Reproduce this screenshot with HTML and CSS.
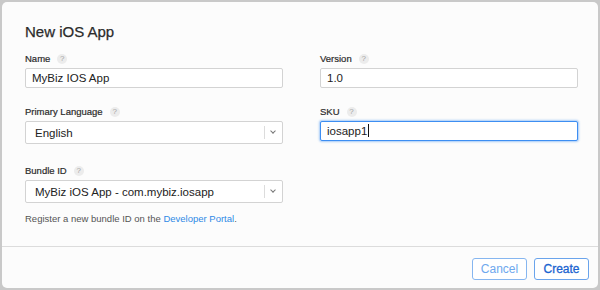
FILE: index.html
```html
<!DOCTYPE html>
<html lang="en">
<head>
    <meta charset="UTF-8">
    <meta name="viewport" content="width=device-width, initial-scale=1.0">
    <title>New iOS App</title>
    <link rel="stylesheet" href="styles.css">
</head>
<body>
    <div class="dialog">
        <div class="dialog-body">
            <h1>New iOS App</h1>
            <div class="fields">
                <div class="field">
                    <label>Name <span class="help">?</span></label>
                    <div class="input">MyBiz IOS App</div>
                </div>
                <div class="field">
                    <label>Version <span class="help">?</span></label>
                    <div class="input">1.0</div>
                </div>
                <div class="field">
                    <label>Primary Language <span class="help">?</span></label>
                    <div class="select">
                        <span class="select-value">English</span>
                        <span class="select-arrow"></span>
                    </div>
                </div>
                <div class="field">
                    <label>SKU <span class="help">?</span></label>
                    <div class="input focused">iosapp1<span class="caret"></span></div>
                </div>
                <div class="field bundle">
                    <label>Bundle ID <span class="help">?</span></label>
                    <div class="select">
                        <span class="select-value">MyBiz iOS App - com.mybiz.iosapp</span>
                        <span class="select-arrow"></span>
                    </div>
                    <p class="hint">Register a new bundle ID on the <a href="#">Developer Portal</a>.</p>
                </div>
            </div>
        </div>
        <div class="dialog-footer">
            <button class="btn cancel">Cancel</button>
            <button class="btn create">Create</button>
        </div>
    </div>
</body>
</html>
```

FILE: styles.css
```css
body {
    margin: 0;
    padding: 2px 2px 0 2px;
    background-color: #c9c9c9;
    font-family: "Liberation Sans", Arial, sans-serif;
    color: #333;
    overflow: hidden;
}
.dialog {
    height: 286px;
    background: #fcfcfc;
    border-radius: 5px;
}
.dialog-body {
    padding: 20px 20px 0 23px;
    height: 224px;
    border-bottom: 1px solid #dcdcdc;
}
h1 {
    margin: 0 0 11px 0;
    font-size: 15px;
    line-height: 20px;
    font-weight: normal;
    color: #2b2b2b;
    -webkit-text-stroke: 0.25px #2b2b2b;
}
.fields {
    display: grid;
    grid-template-columns: 258px 258px;
    column-gap: 37px;
    row-gap: 18px;
    align-items: start;
}
.field.bundle {
    margin-top: 3px;
}
label {
    display: flex;
    align-items: center;
    gap: 7px;
    font-size: 9.5px;
    line-height: 12px;
    color: #2b2b2b;
    -webkit-text-stroke: 0.2px #2b2b2b;
    margin-bottom: 3px;
}
.help {
    display: inline-flex;
    align-items: center;
    justify-content: center;
    width: 10px;
    height: 10px;
    border-radius: 50%;
    background-color: #ececec;
    color: #a5a5a5;
    -webkit-text-stroke: 0;
    font-size: 8px;
    line-height: 10px;
}
.input {
    box-sizing: border-box;
    height: 20px;
    padding: 0 6px;
    border: 1px solid #d3d3d3;
    border-radius: 2px;
    background: #fff;
    font-size: 11.5px;
    line-height: 18px;
    color: #222;
}
.input.focused {
    border-color: #3d8ef2;
    box-shadow: 0 0 2px 1px rgba(61, 142, 242, 0.45);
}
.caret {
    display: inline-block;
    width: 1px;
    height: 13px;
    margin-left: 1px;
    background: #111;
    vertical-align: -2px;
}
.select {
    box-sizing: border-box;
    display: flex;
    align-items: center;
    height: 23px;
    border: 1px solid #d3d3d3;
    border-radius: 2px;
    background: #fff;
}
.select-value {
    flex: 1;
    padding-left: 9px;
    font-size: 11.5px;
    color: #222;
}
.select-arrow {
    position: relative;
    width: 17px;
    height: 13px;
    border-left: 1px solid #dcdcdc;
}
.select-arrow::after {
    content: "";
    position: absolute;
    left: 6px;
    top: 3px;
    width: 3px;
    height: 3px;
    border-right: 1px solid #777;
    border-bottom: 1px solid #777;
    transform: rotate(45deg);
}
.hint {
    margin: 10px 0 0 0;
    font-size: 9.5px;
    line-height: 12px;
    color: #555;
}
.hint a {
    color: #2f8ae6;
    text-decoration: none;
}
.dialog-footer {
    display: flex;
    justify-content: flex-end;
    gap: 7px;
    padding: 11px 9px 0 0;
}
.btn {
    width: 55px;
    height: 22px;
    padding: 0;
    background: #fff;
    border-radius: 3px;
    font-family: "Liberation Sans", Arial, sans-serif;
    font-size: 12px;
    cursor: pointer;
}
.btn.cancel {
    border: 1px solid #86b6f0;
    color: #6ea8ee;
}
.btn.create {
    border: 1px solid #6aa4ec;
    color: #1b64d0;
    -webkit-text-stroke: 0.3px #1b64d0;
}
```
